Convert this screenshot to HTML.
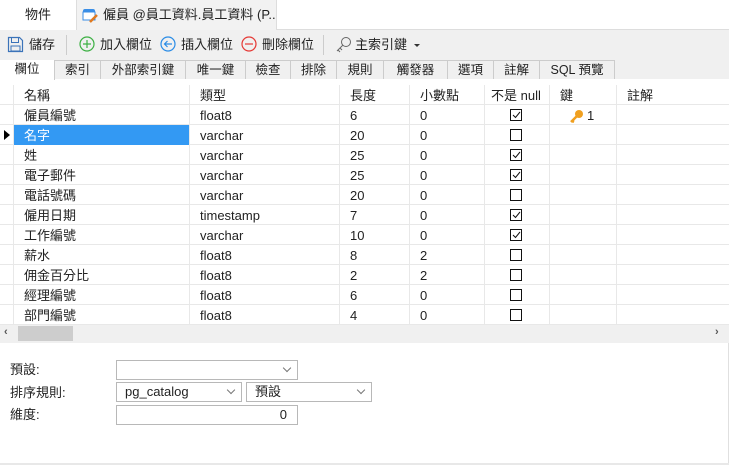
<!DOCTYPE html><html><head><meta charset="utf-8"><style>
*{box-sizing:border-box;margin:0;padding:0}
body{width:729px;height:465px;background:#fff;font-family:"Liberation Sans","Noto Sans CJK TC",sans-serif;font-size:13px;color:#222;position:relative;overflow:hidden}
.a{position:absolute}
.tabs{left:0;top:0;width:729px;height:30px;background:#fff;border-bottom:1px solid #ddd}
.tb{top:0;height:30px;line-height:30px;text-align:center;border-right:1px solid #ddd;white-space:nowrap;overflow:hidden}
.toolbar{left:0;top:30px;width:729px;height:29px;background:#f0f0f0}
.ti{top:30px;height:29px;line-height:29px;font-size:13px}
.sub{left:0;top:59px;width:729px;height:20px;background:#f0f0f0}
.st{top:60px;height:19px;line-height:19px;text-align:center;border-right:1px solid #ccc;border-top:1px solid #ccc;background:#f0f0f0;font-size:12.5px}
.grid{left:0;top:80px;width:729px;height:245px;background:#fff}
.row{position:absolute;left:0;width:729px;height:20px;border-bottom:1px solid #e8e8e8}
.c{position:absolute;top:0;height:20px;line-height:21px;padding-left:10px;border-right:1px solid #e8e8e8;white-space:nowrap}
.cb{position:absolute;left:25px;top:4px;width:12px;height:12px;border:1px solid #111;background:#fff}
.dd{position:absolute;height:20px;border:1px solid #b8b8b8;background:#fff;line-height:18px;padding-left:8px;font-size:13px}
.dd i{position:absolute;right:7px;top:4px;width:6px;height:6px;border-right:1px solid #777;border-bottom:1px solid #777;transform:rotate(45deg)}
</style></head><body>
<div class="a tabs"></div>
<div class="a tb" style="left:0;width:77px;background:#fff">物件</div>
<div class="a tb" style="left:77px;width:200px;background:#f2f2f2;text-align:left;padding-left:26px">僱員 @員工資料.員工資料 (P...</div>
<svg class="a" style="left:82px;top:7px" width="17" height="17"><rect x="1" y="2" width="12" height="11" rx="2" fill="#3a8ee6"/><rect x="1" y="5" width="12" height="8" fill="#fff" stroke="#3a8ee6"/><path d="M8 15 L15 8" stroke="#e07a20" stroke-width="2.5"/></svg>
<div class="a toolbar"></div>
<svg class="a" style="left:7px;top:36px" width="17" height="17"><path d="M1.5 1.5h11l3 3v11h-14z" fill="none" stroke="#3b73b9" stroke-width="1.2"/><rect x="4.5" y="1.5" width="7" height="5" fill="none" stroke="#3b73b9"/><rect x="4" y="10" width="9" height="5" fill="none" stroke="#3b73b9"/></svg>
<div class="a ti" style="left:29px">儲存</div>
<div class="a" style="left:66px;top:35px;width:1px;height:20px;background:#ccc"></div>
<svg class="a" style="left:79px;top:36px" width="16" height="16"><circle cx="8" cy="8" r="7" fill="none" stroke="#3cb043" stroke-width="1.2"/><path d="M8 4v8M4 8h8" stroke="#3cb043" stroke-width="1.2"/></svg>
<div class="a ti" style="left:100px">加入欄位</div>
<svg class="a" style="left:160px;top:36px" width="16" height="16"><circle cx="8" cy="8" r="7" fill="none" stroke="#2a8ce6" stroke-width="1.2"/><path d="M12 8H4.5M7.5 5L4.5 8l3 3" fill="none" stroke="#2a8ce6" stroke-width="1.2"/></svg>
<div class="a ti" style="left:181px">插入欄位</div>
<svg class="a" style="left:241px;top:36px" width="16" height="16"><circle cx="8" cy="8" r="7" fill="none" stroke="#e53935" stroke-width="1.2"/><path d="M4 8h8" stroke="#e53935" stroke-width="1.2"/></svg>
<div class="a ti" style="left:262px">刪除欄位</div>
<div class="a" style="left:323px;top:35px;width:1px;height:20px;background:#ccc"></div>
<svg class="a" style="left:335px;top:36px" width="17" height="17"><circle cx="11" cy="6" r="4.5" fill="none" stroke="#666"/><path d="M8 9L2 15M3 14l2 2M5 12l2 2" stroke="#666" fill="none"/></svg>
<div class="a ti" style="left:355px">主索引鍵</div>
<div class="a" style="left:414px;top:44px;border:3px solid transparent;border-top:3px solid #333"></div>
<div class="a sub"></div>
<div class="a st" style="left:0;width:55px;background:#fff;height:20px;border-top:none">欄位</div>
<div class="a st" style="left:55px;width:46px">索引</div>
<div class="a st" style="left:101px;width:85px">外部索引鍵</div>
<div class="a st" style="left:186px;width:60px">唯一鍵</div>
<div class="a st" style="left:246px;width:45px">檢查</div>
<div class="a st" style="left:291px;width:46px">排除</div>
<div class="a st" style="left:337px;width:47px">規則</div>
<div class="a st" style="left:384px;width:64px">觸發器</div>
<div class="a st" style="left:448px;width:46px">選項</div>
<div class="a st" style="left:494px;width:46px">註解</div>
<div class="a st" style="left:540px;width:75px">SQL 預覽</div>
<div class="a grid">
<div class="row" style="top:5px"><div class="c" style="left:0;width:14px;padding:0"></div><div class="c" style="left:14px;width:176px">名稱</div><div class="c" style="left:190px;width:150px">類型</div><div class="c" style="left:340px;width:70px">長度</div><div class="c" style="left:410px;width:75px">小數點</div><div class="c" style="left:485px;width:65px;padding-left:6px">不是 null</div><div class="c" style="left:550px;width:67px">鍵</div><div class="c" style="left:617px;width:112px;border:none">註解</div></div>
</div>
<div id="rows"></div>
<script>
var d=[["僱員編號","float8","6","0",1,1],["名字","varchar","20","0",0],["姓","varchar","25","0",1],["電子郵件","varchar","25","0",1],["電話號碼","varchar","20","0",0],["僱用日期","timestamp","7","0",1],["工作編號","varchar","10","0",1],["薪水","float8","8","2",0],["佣金百分比","float8","2","2",0],["經理編號","float8","6","0",0],["部門編號","float8","4","0",0]];
var h="";d.forEach(function(r,i){var t=105+i*20,s=i==1;
h+='<div class="row" style="top:'+t+'px">'+'<div class="c" style="left:0;width:14px;padding:0">'+(s?'<div style="position:absolute;left:4px;top:5px;border:5px solid transparent;border-left:6px solid #000;border-right:none"></div>':'')+'</div>'+
'<div class="c" style="left:14px;width:176px;'+(s?'background:#3399f3;color:#fff':'')+'">'+r[0]+'</div><div class="c" style="left:190px;width:150px">'+r[1]+'</div><div class="c" style="left:340px;width:70px">'+r[2]+'</div><div class="c" style="left:410px;width:75px">'+r[3]+'</div><div class="c" style="left:485px;width:65px"><div class="cb">'+(r[4]?'<svg width="10" height="10" style="position:absolute;left:0;top:0"><path d="M2 5l2.5 2.5L9 2" fill="none" stroke="#111"/></svg>':'')+'</div></div><div class="c" style="left:550px;width:67px">'+(r[5]?'<svg width="16" height="14" style="position:absolute;left:19px;top:4px"><circle cx="10" cy="5" r="4" fill="#f0a020"/><path d="M8 7L2 13M3 12l2 1" stroke="#f0a020" stroke-width="2.5"/></svg><span style="position:absolute;left:37px">1</span>':'')+'</div><div class="c" style="left:617px;width:112px;border:none"></div></div>';});
document.getElementById("rows").innerHTML=h;
</script>
<div class="a" style="left:0;top:325px;width:729px;height:18px;background:#f0f0f0"></div>
<div class="a" style="left:18px;top:326px;width:55px;height:15px;background:#cdcdcd"></div>
<div class="a" style="left:4px;top:326px;font-size:11px;color:#555;font-weight:bold">‹</div>
<div class="a" style="left:715px;top:326px;font-size:11px;color:#555;font-weight:bold">›</div>
<div class="a" style="left:10px;top:360px;line-height:20px">預設:</div>
<div class="a" style="left:10px;top:383px;line-height:20px">排序規則:</div>
<div class="a" style="left:10px;top:405px;line-height:20px">維度:</div>
<div class="dd" style="left:116px;top:360px;width:182px"><i></i></div>
<div class="dd" style="left:116px;top:382px;width:126px">pg_catalog<i></i></div>
<div class="dd" style="left:246px;top:382px;width:126px">預設<i></i></div>
<div class="dd" style="left:116px;top:405px;width:182px;text-align:right;padding-right:10px">0</div>
<div class="a" style="left:728px;top:343px;width:1px;height:122px;background:#e0e0e0"></div>
<div class="a" style="left:0;top:463px;width:729px;height:2px;background:#e8e8e8"></div>
</body></html>
